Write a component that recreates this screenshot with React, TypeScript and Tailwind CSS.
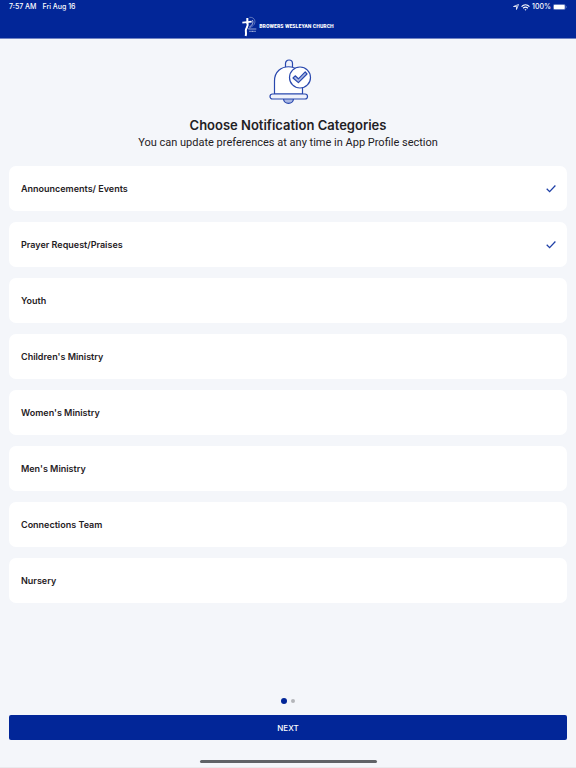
import { useState } from "react";

const categories = [
  "Announcements/ Events",
  "Prayer Request/Praises",
  "Youth",
  "Children's Ministry",
  "Women's Ministry",
  "Men's Ministry",
  "Connections Team",
  "Nursery",
];

function StatusBar() {
  return (
    <div className="flex h-3.5 items-center justify-between px-[9px] text-[7px] leading-[14px] font-medium text-white">
      <div className="flex gap-[6px]">
        <span>7:57 AM</span>
        <span>Fri Aug 16</span>
      </div>
      <div className="flex items-center gap-[2px]">
        <svg className="h-[6px] w-[6px]" viewBox="0 0 12 12" fill="none" stroke="currentColor" strokeWidth="1.6" strokeLinejoin="round">
          <path d="M11 1 7 11V5H1z" />
        </svg>
        <svg className="h-[7px] w-[9px]" viewBox="0 0 16 12" fill="none" stroke="currentColor" strokeWidth="2.2">
          <path d="M1 4.5C5 .5 11 .5 15 4.5" />
          <path d="M3.800 7.300c2.500-2.400 5.900-2.400 8.400 0" />
          <path d="M6.200 9.300h3.600L8 11.600z" fill="currentColor" stroke="none" />
        </svg>
        <span>100%</span>
        <svg className="h-[6px] w-[14px]" viewBox="0 0 28 12">
          <rect x=".5" y=".5" width="24" height="11" rx="3" fill="none" stroke="currentColor" opacity=".5" />
          <rect x="1.500" y="1.500" width="22" height="9" rx="2" fill="currentColor" />
          <path d="M26 4v4c1.600-.6 1.600-3.400 0-4z" fill="currentColor" opacity=".6" />
        </svg>
      </div>
    </div>
  );
}

function Brand() {
  return (
    <div className="flex h-6 items-center justify-center gap-[2px] text-white">
      <svg className="h-[21px] w-[15px]" viewBox="0 0 45 63" fill="none" stroke="currentColor">
        <path d="M16 6v17" strokeWidth="6" />
        <path d="M1 20 29 17" strokeWidth="5" />
        <path d="M16 20c4 9-1 13-4 20-2 6 2 10-1 20" strokeWidth="6" />
        <path d="M22 4C39 2 44 20 33 29c-4 4-9 6-14 9" strokeWidth="1.500" opacity=".7" />
        <path d="M31 12c4 7 1 15-9 21" strokeWidth="3" opacity=".7" />
        <path d="M19 39h24" strokeWidth="3" opacity=".6" />
        <path d="M22 46h20" strokeWidth="4" strokeDasharray="3 1" opacity=".6" />
      </svg>
      <span className="font-['Roboto_Condensed',Roboto,sans-serif] text-[6px] leading-[8px] font-bold whitespace-nowrap">
        BROWERS WESLEYAN CHURCH
      </span>
    </div>
  );
}

function BellIllustration() {
  return (
    <svg className="h-[46px] w-[50px]" viewBox="-6 0 50 46" fill="none" stroke="#2948ae" strokeWidth="1.200">
      <path d="M16.500 9V4.500a3.500 3.500 0 0 1 7 0V9" fill="#eef1fb" />
      <path d="M5.500 35V22C5.500 3 33.500 3 33.500 22v13z" fill="#fff" />
      <path d="M14.500 39.500c0 6.500 10 6.500 10 0z" fill="#aab8e4" />
      <rect x="1" y="35" width="37.500" height="5" rx="2.500" fill="#eef1fb" />
      <circle cx="31" cy="18.500" r="10.500" fill="#fff" />
      <path d="m24 19 2.200-2.200 3.200 3 6.800-7 1.800 2.200-8.600 8.600z" fill="#aab8e4" strokeLinejoin="round" />
    </svg>
  );
}

export default function App() {
  const [selected, setSelected] = useState<string[]>(categories.slice(0, 2));

  const toggle = (name: string) =>
    setSelected((prev) =>
      prev.includes(name) ? prev.filter((n) => n !== name) : [...prev, name],
    );

  return (
    <div className="flex min-h-screen flex-col bg-[#f4f6fa] font-[Inter,sans-serif] text-[#1f2124]">
      <header className="border-b border-[#7183c3] bg-[#022698]">
        <StatusBar />
        <Brand />
      </header>

      <main className="flex flex-1 flex-col px-[9px] pt-5">
        <div className="flex flex-col items-center text-center">
          <BellIllustration />
          <h1 className="mt-[11px] text-[13px] leading-[18px] font-semibold">Choose Notification Categories</h1>
          <p className="font-[Roboto,sans-serif] text-[11px] leading-[18px]">You can update preferences at any time in App Profile section</p>
        </div>

        <ul className="mt-[14px] flex flex-col gap-[11px]">
          {categories.map((name) => (
            <li key={name}>
              <label className="flex h-[45px] cursor-pointer items-center justify-between rounded-[7px] bg-white pr-[11px] pl-3 text-[9px] leading-3 font-semibold">
                {name}
                <input
                  type="checkbox"
                  className="peer sr-only"
                  checked={selected.includes(name)}
                  onChange={() => toggle(name)}
                />
                <svg className="hidden h-[10px] w-[10px] peer-checked:block" viewBox="0 0 10 10" fill="none" stroke="#1e3fa6" strokeWidth="1.300">
                  <path d="M.7 4.800 3.600 7.600 9.400 1.500" />
                </svg>
              </label>
            </li>
          ))}
        </ul>

        <div className="mt-auto flex items-center justify-center gap-1 pb-[11px]">
          <span className="size-[6px] rounded-full bg-[#022698]" />
          <span className="size-1 rounded-full bg-[#b4b6ba]" />
        </div>
        <button type="button" className="h-[25px] rounded-[2px] bg-[#022698] text-[8px] leading-[10px] font-medium text-white">
          NEXT
        </button>
      </main>

      <footer className="flex h-7 justify-center border-b border-[#e9eaed] pt-5">
        <div className="h-[3px] w-[177px] rounded-full bg-[#606367]" />
      </footer>
    </div>
  );
}
